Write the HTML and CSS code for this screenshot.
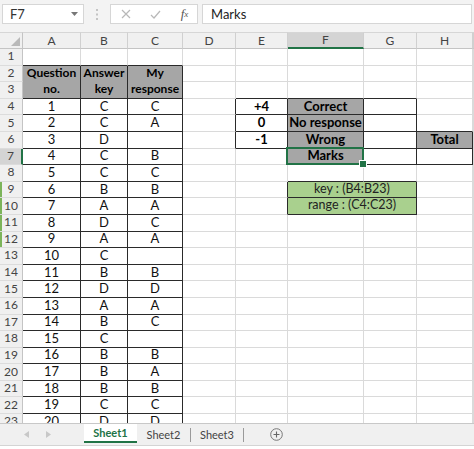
FILE: index.html
```html
<!DOCTYPE html>
<html>
<head>
<meta charset="utf-8">
<link rel="stylesheet" href="styles.css">
</head>
<body>
<div class="fbar">
  <div class="namebox"><span>F7</span><svg class="dd" width="7" height="4" viewBox="0 0 7 4"><path d="M0 0H7L3.5 4Z" fill="#777"/></svg></div>
  <div class="dots"><svg width="2" height="11" viewBox="0 0 2 11"><rect x="0" y="0" width="2" height="2" fill="#c4c4c4"/><rect x="0" y="4.5" width="2" height="2" fill="#c4c4c4"/><rect x="0" y="9" width="2" height="2" fill="#c4c4c4"/></svg></div>
  <div class="fxbox">
    <span class="ic"><svg width="10" height="10" viewBox="0 0 10 10"><path d="M1 1L9 9M9 1L1 9" stroke="#b8b8b8" stroke-width="1.2" fill="none"/></svg></span>
    <span class="ic"><svg width="11" height="9" viewBox="0 0 11 9"><path d="M1 5L4 8L10 1" stroke="#b8b8b8" stroke-width="1.2" fill="none"/></svg></span>
    <span class="ic fx">f<sub>x</sub></span>
  </div>
  <div class="finput">Marks</div>
</div>

<div class="sheet">
  <div class="corner"><svg width="9" height="9" viewBox="0 0 9 9"><path d="M9 0V9H0Z" fill="#b9b9b9"/></svg></div>
  <div class="ch">A</div><div class="ch">B</div><div class="ch">C</div><div class="ch">D</div><div class="ch">E</div><div class="ch chsel">F</div><div class="ch">G</div><div class="ch">H</div><div class="ch"></div>

  <div class="rh">1</div><div class="tb"></div><div class="tb"></div><div class="tb"></div><div></div><div></div><div></div><div></div><div></div><div></div>

  <div class="rh">2</div>
  <div class="t g hd">Question<br>no.</div>
  <div class="t g hd">Answer<br>key</div>
  <div class="t g hd">My<br>response</div>
  <div></div><div></div><div></div><div></div><div></div><div></div>

  <div class="rh">3</div><div></div><div class="tb"></div><div class="tb"></div><div class="tb"></div><div></div><div></div>

  <div class="rh">4</div><div class="t">1</div><div class="t">C</div><div class="t">C</div><div class="tr"></div><div class="t b">+4</div><div class="t g">Correct</div><div class="t"></div><div></div><div></div>
  <div class="rh">5</div><div class="t">2</div><div class="t">C</div><div class="t">A</div><div class="tr"></div><div class="t b">0</div><div class="t g">No response</div><div class="t"></div><div class="tb"></div><div></div>
  <div class="rh">6</div><div class="t">3</div><div class="t">D</div><div class="t"></div><div class="tr"></div><div class="t b">-1</div><div class="t g">Wrong</div><div class="t"></div><div class="t g">Total</div><div></div>
  <div class="rh rhsel">7</div><div class="t">4</div><div class="t">C</div><div class="t">B</div><div></div><div class="tr"></div><div class="t g sel">Marks</div><div class="t"></div><div class="t"></div><div></div>
  <div class="rh">8</div><div class="t">5</div><div class="t">C</div><div class="t">C</div><div></div><div></div><div class="tb"></div><div class="tb"></div><div></div><div></div>
  <div class="rh gl">9</div><div class="t">6</div><div class="t">B</div><div class="t">B</div><div></div><div class="tr"></div><div class="t gr span2">key : (B4:B23)</div><div></div><div></div>
  <div class="rh gl">10</div><div class="t">7</div><div class="t">A</div><div class="t">A</div><div></div><div class="tr"></div><div class="t gr span2">range : (C4:C23)</div><div></div><div></div>
  <div class="rh gl">11</div><div class="t">8</div><div class="t">D</div><div class="t">C</div><div></div><div></div><div></div><div></div><div></div><div></div>
  <div class="rh gl">12</div><div class="t">9</div><div class="t">A</div><div class="t">A</div><div></div><div></div><div></div><div></div><div></div><div></div>
  <div class="rh">13</div><div class="t">10</div><div class="t">C</div><div class="t"></div><div></div><div></div><div></div><div></div><div></div><div></div>
  <div class="rh">14</div><div class="t">11</div><div class="t">B</div><div class="t">B</div><div></div><div></div><div></div><div></div><div></div><div></div>
  <div class="rh">15</div><div class="t">12</div><div class="t">D</div><div class="t">D</div><div></div><div></div><div></div><div></div><div></div><div></div>
  <div class="rh">16</div><div class="t">13</div><div class="t">A</div><div class="t">A</div><div></div><div></div><div></div><div></div><div></div><div></div>
  <div class="rh">17</div><div class="t">14</div><div class="t">B</div><div class="t">C</div><div></div><div></div><div></div><div></div><div></div><div></div>
  <div class="rh">18</div><div class="t">15</div><div class="t">C</div><div class="t"></div><div></div><div></div><div></div><div></div><div></div><div></div>
  <div class="rh">19</div><div class="t">16</div><div class="t">B</div><div class="t">B</div><div></div><div></div><div></div><div></div><div></div><div></div>
  <div class="rh">20</div><div class="t">17</div><div class="t">B</div><div class="t">A</div><div></div><div></div><div></div><div></div><div></div><div></div>
  <div class="rh">21</div><div class="t">18</div><div class="t">B</div><div class="t">B</div><div></div><div></div><div></div><div></div><div></div><div></div>
  <div class="rh">22</div><div class="t">19</div><div class="t">C</div><div class="t">C</div><div></div><div></div><div></div><div></div><div></div><div></div>
  <div class="rh">23</div><div class="t">20</div><div class="t">D</div><div class="t">D</div><div></div><div></div><div></div><div></div><div></div><div></div>
</div>

<div class="tabs">
  <div class="nav">
    <svg width="5" height="7" viewBox="0 0 5 7"><path d="M5 0V7L0 3.5Z" fill="#c8c8c8"/></svg>
    <svg width="5" height="7" viewBox="0 0 5 7"><path d="M0 0V7L5 3.5Z" fill="#c8c8c8"/></svg>
  </div>
  <div class="tab active">Sheet1</div>
  <div class="tab">Sheet2</div>
  <span class="sep"></span>
  <div class="tab tab3">Sheet3</div>
  <span class="sep"></span>
  <div class="plus"><svg width="13" height="13" viewBox="0 0 13 13"><circle cx="6.5" cy="6.5" r="5.8" stroke="#777" stroke-width="1" fill="none"/><path d="M6.5 3.5V9.5M3.5 6.5H9.5" stroke="#666" stroke-width="1.1"/></svg></div>
</div>
<div class="foot"></div>
</body>
</html>
```

FILE: styles.css
```css
* { box-sizing: border-box; }
html, body { margin: 0; padding: 0; }
body {
  width: 474px;
  height: 449px;
  overflow: hidden;
  background: #fff;
  font-family: Lato, "Liberation Sans", sans-serif;
  color: #000;
}

/* formula bar */
.fbar {
  height: 32px;
  background: #f3f3f3;
  display: flex;
  align-items: flex-start;
  padding: 4px 2px 0 2px;
}
.namebox {
  width: 82px;
  height: 20px;
  background: #fff;
  border: 1px solid #d6d6d6;
  display: flex;
  align-items: center;
  justify-content: space-between;
  padding: 0 5px 0 7px;
  font-size: 13px;
  color: #333;
}
.dots {
  width: 26px;
  height: 20px;
  display: flex;
  align-items: center;
  justify-content: center;
}
.fxbox {
  width: 88px;
  height: 20px;
  background: #fff;
  border: 1px solid #d6d6d6;
  display: grid;
  grid-template-columns: 29px 30px 29px;
  align-items: center;
}
.ic { display: flex; justify-content: center; align-items: center; }
.fx {
  font-family: "Liberation Serif", serif;
  font-style: italic;
  font-size: 13px;
  color: #555;
}
.fx sub { font-size: 9px; vertical-align: -1px; }
.finput {
  flex: 1;
  margin-left: 4px;
  height: 20px;
  background: #fff;
  border: 1px solid #d6d6d6;
  padding-left: 8px;
  display: flex;
  align-items: center;
  font-size: 13px;
  color: #222;
}

/* sheet grid */
.sheet {
  height: 391px;
  overflow: hidden;
  display: grid;
  grid-template-columns: 23px 58px 47px 55px 53px 52px 76px 53px 56px 1fr;
  grid-template-rows: 17px repeat(23, 16.6px);
  font-size: 13px;
}
.sheet > div {
  border-right: 1px solid #dadada;
  border-bottom: 1px solid #dadada;
  display: flex;
  align-items: center;
  justify-content: center;
  white-space: nowrap;
  overflow: hidden;
  line-height: 1;
  padding-bottom: 1px;
  color: #111;
}
.sheet > .corner {
  background: #f0f0f0;
  border-top: 1px solid #d6d6d6;
  border-right: 1px solid #c4c4c4;
  border-bottom: 1px solid #c4c4c4;
  align-items: flex-end;
  justify-content: flex-end;
  padding: 0 2px 2px 0;
}
.sheet > .ch {
  background: #f0f0f0;
  border-top: 1px solid #d6d6d6;
  border-right: 1px solid #d0d0d0;
  border-bottom: 1px solid #c4c4c4;
  font-size: 12px;
  color: #444;
  padding-bottom: 0;
}
.sheet > .chsel {
  background: #d4d4d4;
  border-bottom: 2px solid #217346;
}
.sheet > .rh {
  background: #f0f0f0;
  border-right: 1px solid #c4c4c4;
  border-bottom: 1px solid #dcdcdc;
  font-size: 12px;
  color: #444;
}
.sheet > .rhsel {
  background: #d4d4d4;
  border-right: 2px solid #217346;
}
.sheet > .gl { box-shadow: inset 2px 0 0 #7cb45a; }

.sheet > .t { border-right-color: #2a2a2a; border-bottom-color: #2a2a2a; }
.sheet > .tb { border-bottom-color: #2a2a2a; }
.sheet > .tr { border-right-color: #2a2a2a; }
.sheet > .g { background: #a6a6a6; font-weight: bold; color: #000; }
.sheet > .b { font-weight: bold; color: #000; }
.sheet > .hd {
  grid-row: span 2;
  font-size: 12px;
  line-height: 16px;
  text-align: center;
  white-space: normal;
}
.sheet > .gr {
  background: #a9d08e;
  color: #222;
  font-size: 12.5px;
}
.sheet > .span2 { grid-column: span 2; }
.sheet > .sel {
  position: relative;
  overflow: visible;
}
.sel::after {
  content: "";
  position: absolute;
  left: -2px;
  top: -2px;
  right: -1px;
  bottom: -1px;
  border: 2px solid #217346;
  z-index: 2;
}
.sel::before {
  content: "";
  position: absolute;
  right: -4px;
  bottom: -4px;
  width: 6px;
  height: 6px;
  background: #217346;
  border: 1px solid #fff;
  z-index: 3;
}

/* sheet tabs */
.tabs {
  height: 23px;
  background: #f0f0f0;
  border-top: 1px solid #c8c8c8;
  border-bottom: 1px solid #d4d4d4;
  display: flex;
  align-items: stretch;
  font-size: 11px;
}
.nav {
  width: 84px;
  display: flex;
  align-items: center;
  gap: 17px;
  padding-left: 24px;
}
.tab {
  width: 53px;
  display: flex;
  align-items: center;
  justify-content: center;
  color: #444;
}
.tab3 { width: 52px; }
.tab.active {
  background: #fff;
  color: #217346;
  font-weight: bold;
  border-bottom: 2px solid #217346;
  margin-bottom: 2px;
}
.sep {
  width: 1px;
  height: 14px;
  align-self: center;
  background: #9a9a9a;
}
.plus {
  margin-left: 26px;
  display: flex;
  align-items: center;
}
.foot { height: 3px; background: #fff; }
```
